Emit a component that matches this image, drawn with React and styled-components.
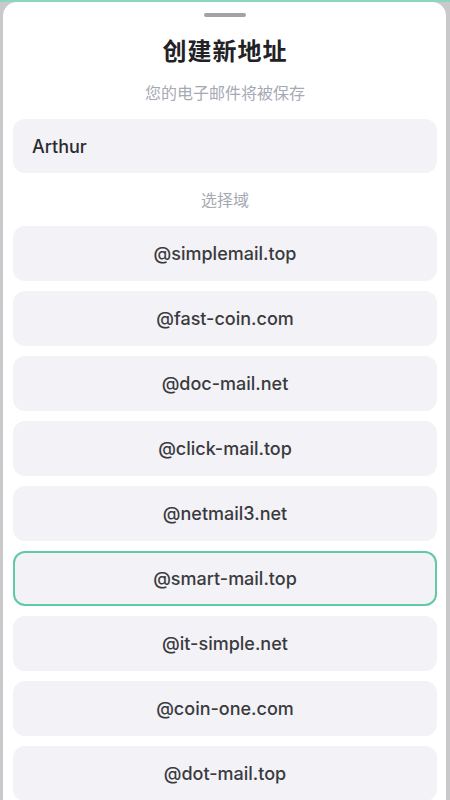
import React, { useState } from "react";
import styled, { createGlobalStyle } from "styled-components";

const GlobalStyle = createGlobalStyle`
  html, body {
    margin: 0;
    padding: 0;
    background: #c9c9cb;
    font-family: Inter, "Noto Sans CJK SC", "Noto Sans", sans-serif;
  }
  * { box-sizing: border-box; }
`;

const domains = [
  "@simplemail.top",
  "@fast-coin.com",
  "@doc-mail.net",
  "@click-mail.top",
  "@netmail3.net",
  "@smart-mail.top",
  "@it-simple.net",
  "@coin-one.com",
  "@dot-mail.top",
];

const App = () => {
  const [selected, setSelected] = useState(5);

  return (
    <Page>
      <GlobalStyle />
      <TopStrip />
      <Sheet>
        <Handle />
        <Title>创建新地址</Title>
        <Subtitle>您的电子邮件将被保存</Subtitle>
        <NameInput defaultValue="Arthur" />
        <Label>选择域</Label>
        <List>
          {domains.map((d, i) => (
            <Domain key={d} $active={i === selected} onClick={() => setSelected(i)}>
              {d}
            </Domain>
          ))}
        </List>
      </Sheet>
    </Page>
  );
};

export default App;

const Page = styled.div`
  width: 450px;
  height: 800px;
  overflow: hidden;
  display: flex;
  flex-direction: column;
`;

const TopStrip = styled.div`
  height: 2px;
  background: #8fd3c0;
  flex-shrink: 0;
`;

const Sheet = styled.div`
  flex: 1;
  margin: 0 4px 0 3px;
  background: #ffffff;
  border-radius: 14px 14px 0 0;
  padding: 11px 9px 0 10px;
  display: flex;
  flex-direction: column;
  align-items: stretch;
`;

const Handle = styled.div`
  width: 42px;
  height: 4px;
  border-radius: 2px;
  background: #a3a3a6;
  align-self: center;
`;

const Title = styled.h1`
  margin: 20px 0 0;
  font-size: 24px;
  line-height: 30px;
  font-weight: 700;
  letter-spacing: 1px;
  color: #222226;
  text-align: center;
`;

const Subtitle = styled.p`
  margin: 16px 0 0;
  font-size: 16px;
  line-height: 20px;
  color: #a6a9b4;
  text-align: center;
`;

const NameInput = styled.input`
  margin-top: 16px;
  height: 54px;
  border: none;
  outline: none;
  border-radius: 12px;
  background: #f2f2f7;
  padding: 0 19px;
  font-family: Inter, sans-serif;
  font-size: 18px;
  font-weight: 500;
  color: #2c2c30;
`;

const Label = styled.p`
  margin: 17px 0 0;
  font-size: 16px;
  line-height: 20px;
  color: #a6a9b4;
  text-align: center;
`;

const List = styled.div`
  margin-top: 16px;
  display: flex;
  flex-direction: column;
  gap: 10px;
`;

const Domain = styled.div`
  height: 55px;
  border-radius: 12px;
  background: #f2f2f7;
  border: 2px solid ${(p) => (p.$active ? "#5fcaa8" : "transparent")};
  display: flex;
  align-items: center;
  justify-content: center;
  font-size: 18px;
  font-weight: 500;
  color: #3a3a3e;
  cursor: pointer;
`;
